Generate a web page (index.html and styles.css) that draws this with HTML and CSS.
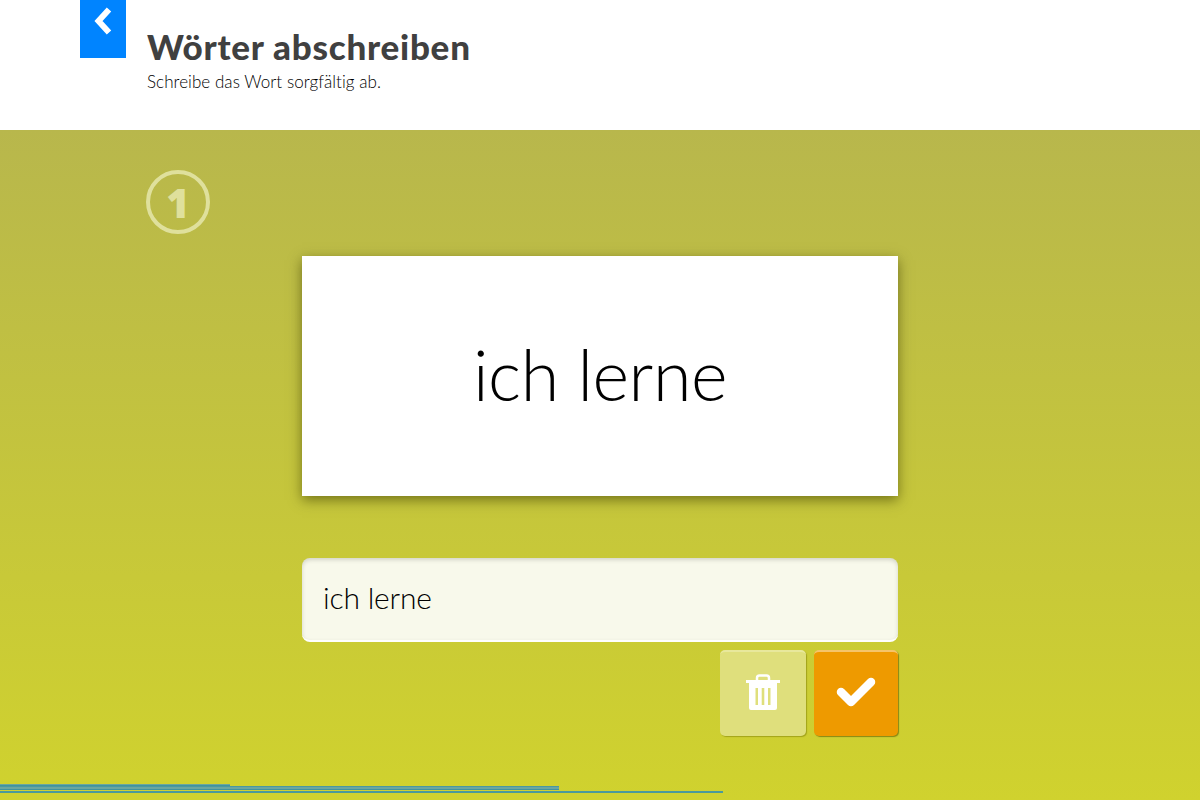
FILE: index.html
```html
<!DOCTYPE html>
<html lang="de">
<head>
  <meta charset="UTF-8" />
  <title>Wörter abschreiben</title>
  <link rel="stylesheet" href="styles.css">
</head>
<body>
  <header class="top">
    <a class="back-btn" href="#">
      <svg width="22" height="30" viewBox="0 0 22 30"><path d="M17 2.500 L6.500 14 L17 25.500" fill="none" stroke="#fff" stroke-width="6"/></svg>
    </a>
    <div class="title-block">
      <h1>Wörter abschreiben</h1>
      <p>Schreibe das Wort sorgfältig ab.</p>
    </div>
  </header>

  <main class="stage">
    <div class="step">1</div>
    <div class="exercise">
      <div class="word-card">ich lerne</div>
      <input class="word-input" type="text" value="ich lerne">
      <div class="actions">
        <button class="btn btn-clear">
          <svg width="36" height="38" viewBox="0 0 36 38">
            <path fill="#fff" d="M1 7h34v3H1z"/>
            <path fill="none" stroke="#fff" stroke-width="2.500" d="M12 8V5a2.500 2.500 0 0 1 2.500-2.500h7A2.500 2.500 0 0 1 24 5v3"/>
            <path fill="#fff" fill-rule="evenodd" d="M4 10h28v25a2 2 0 0 1-2 2H6a2 2 0 0 1-2-2zM10.500 15v17h2.500V15zM16.700 15v17h2.600V15zM23 15v17h2.500V15z"/>
          </svg>
        </button>
        <button class="btn btn-check">
          <svg width="40" height="32" viewBox="0 0 40 32"><path d="M5 16 L15 26 L35 6" fill="none" stroke="#fff" stroke-width="8.500" stroke-linecap="round" stroke-linejoin="round"/></svg>
        </button>
      </div>
    </div>
    <div class="progress">
      <div class="bar bar-one"></div>
      <div class="bar bar-two"></div>
      <div class="bar bar-three"></div>
    </div>
  </main>
</body>
</html>
```

FILE: styles.css
```css
* {
  box-sizing: border-box;
  margin: 0;
  padding: 0;
}

html, body {
  height: 100%;
  overflow: hidden;
}

body {
  font-family: 'Lato', sans-serif;
  background-color: #fff;
  color: #000;
}

.top {
  display: flex;
  height: 130px;
  padding-left: 80px;
  background-color: #fff;
}

.back-btn {
  display: flex;
  justify-content: center;
  width: 46px;
  height: 58px;
  padding-top: 7px;
  background-color: #0084ff;
}

.title-block {
  margin-left: 21px;
  padding-top: 25px;
}

.title-block h1 {
  font-size: 35px;
  line-height: 42px;
  font-weight: 900;
  letter-spacing: 0.75px;
  color: #404040;
}

.title-block p {
  font-size: 17px;
  line-height: 24px;
  margin-top: 3px;
  font-weight: 300;
  letter-spacing: 0.06px;
  color: #000;
}

.stage {
  position: relative;
  height: 670px;
  padding: 40px 0 0 146px;
  background: linear-gradient(to bottom, #b8b74c 0%, #d0d22e 100%);
}

.step {
  display: flex;
  align-items: center;
  justify-content: center;
  width: 64px;
  height: 64px;
  border: 4px solid #dfe09c;
  border-radius: 50%;
  font-family: 'Open Sans', sans-serif;
  font-size: 40px;
  font-weight: 800;
  color: #dfe09c;
}

.exercise {
  width: 596px;
  margin: 22px 0 0 156px;
}

.word-card {
  display: flex;
  align-items: center;
  justify-content: center;
  height: 240px;
  padding-bottom: 5px;
  background-color: #fff;
  font-size: 70px;
  font-weight: 300;
  letter-spacing: -0.4px;
  box-shadow: 0 4px 12px rgba(60, 60, 0, 0.6);
}

.word-input {
  display: block;
  width: 100%;
  height: 84px;
  margin-top: 62px;
  padding: 0 21px 5px;
  border: none;
  border-bottom: 2px solid #fff;
  border-radius: 8px;
  outline: none;
  background-color: #f8f9eb;
  font-family: inherit;
  font-size: 30px;
  font-weight: 300;
  letter-spacing: -0.2px;
  color: #000;
  box-shadow: inset 0 2px 4px rgba(0, 0, 0, 0.15);
}

.actions {
  display: flex;
  justify-content: flex-end;
  gap: 8px;
  margin-top: 8px;
}

.btn {
  display: flex;
  align-items: center;
  justify-content: center;
  height: 86px;
  padding-bottom: 5px;
  border: none;
  border-radius: 5px;
}

.btn-clear {
  width: 86px;
  background-color: #dfdf7c;
  border-top: 2px solid #e8e89c;
  box-shadow: 1px 1px 1px rgba(120, 120, 0, 0.5);
}

.btn-check {
  width: 84px;
  background-color: #ee9a00;
  border-top: 2px solid #f5c46a;
  box-shadow: 1px 1px 1px rgba(90, 90, 0, 0.6);
}

.progress {
  position: absolute;
  left: 0;
  right: 0;
  top: 654px;
}

.bar {
  background-color: #6aa6a0;
  border-bottom: 1px solid #3f93a0;
}

.bar-one {
  width: 230px;
  height: 2px;
}

.bar-two {
  width: 559px;
  height: 4px;
  border-top: 1px solid #4a98a0;
}

.bar-three {
  width: 723px;
  height: 2px;
  margin-top: 1px;
  background-color: #4b9a9a;
  border: none;
}
```
